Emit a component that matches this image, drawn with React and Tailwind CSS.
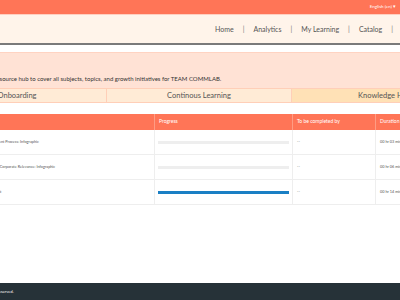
export default function App() {
  const rows = [
    { t: "Custom Rapid eLearning Content Development Process: Infographic", p: 0, d: "00 hr 03 mins" },
    { t: "Why Custom eLearning Still Fully Retains Its Corporate Relevance: Infographic", p: 0, d: "00 hr 06 mins" },
    { t: "A Good New Employee Onboarding Checklist", p: 100, d: "00 hr 14 mins" },
  ];
  return (
    <div className="w-[400px] h-[300px] overflow-hidden flex flex-col bg-white font-['Lato','Liberation_Sans',sans-serif]">
      <div className="h-[15px] shrink-0 bg-[#ff7557] border-b border-[#ffcfc0] flex items-center justify-end pr-[4px]">
        <span className="text-[4.5px] text-white whitespace-nowrap">English (en) ▾</span>
      </div>
      <div className="h-[30px] shrink-0 bg-[#fff4ea] border-b-2 border-[#7a7a7a] flex items-center pl-[215px] gap-[9px] whitespace-nowrap text-[7px] text-[#555]">
        <span>Home</span><span className="text-[#777]">|</span>
        <span>Analytics</span><span className="text-[#777]">|</span>
        <span>My Learning</span><span className="text-[#777]">|</span>
        <span>Catalog</span><span className="text-[#777]">|</span>
        <span>Notifications</span>
      </div>
      <div className="ml-[-78px] w-[555px] shrink-0 mt-[7px]">
        <div className="h-[36px] bg-[#ffe2d5] border-t border-[#ffd3c2] flex items-end pb-[5px] pl-[16px]">
          <p className="text-[6px] text-[#333] whitespace-nowrap">This is your one-stop resource hub to cover all subjects, topics, and growth initiatives for TEAM COMMLAB.</p>
        </div>
        <div className="h-[15px] ml-[6px] grid grid-cols-[179px_185px_1fr] border-y border-[#ffcfb8] text-[7.5px] text-[#555]">
          <div className="bg-[#ffebd6] border-r border-[#ffcfb8] flex items-center justify-center">Onboarding</div>
          <div className="bg-[#ffebd6] border-r border-[#ffcfb8] flex items-center justify-center">Continous Learning</div>
          <div className="bg-[#ffe1b6] flex items-center justify-center">Knowledge Hub</div>
        </div>
        <div className="mt-[11px] text-[5px]">
          <div className="h-[16px] bg-[#ff7557] text-white grid grid-cols-[233px_138px_83px_101px]">
            <div className="border-r border-[#ff9c84] flex items-center pl-[4px]">Title</div>
            <div className="border-r border-[#ff9c84] flex items-center pl-[4px]">Progress</div>
            <div className="border-r border-[#ff9c84] flex items-center pl-[4px]">To be completed by</div>
            <div className="flex items-center pl-[4px]">Duration</div>
          </div>
          {rows.map((r, i) => (
            <div key={i} className="h-[25px] border-b border-[#eeeeee] grid grid-cols-[233px_138px_83px_101px] text-[#555] text-[3.8px]">
              <div className="border-r border-[#eeeeee] flex items-center pl-[4px] whitespace-nowrap">{r.t}</div>
              <div className="border-r border-[#eeeeee] flex items-center px-[3px]">
                <div className="w-full h-[3px] bg-[#eeeeee]">
                  <div className="h-full bg-[#1a7fc4]" style={{ width: r.p + "%" }} />
                </div>
              </div>
              <div className="border-r border-[#eeeeee] flex items-center pl-[4px]">--</div>
              <div className="flex items-center pl-[4px] whitespace-nowrap">{r.d}</div>
            </div>
          ))}
        </div>
      </div>
      <div className="mt-auto h-[17px] shrink-0 bg-[#263238] flex items-center">
        <span className="ml-[-19px] text-[4px] text-white whitespace-nowrap">All rights reserved.</span>
      </div>
    </div>
  );
}
